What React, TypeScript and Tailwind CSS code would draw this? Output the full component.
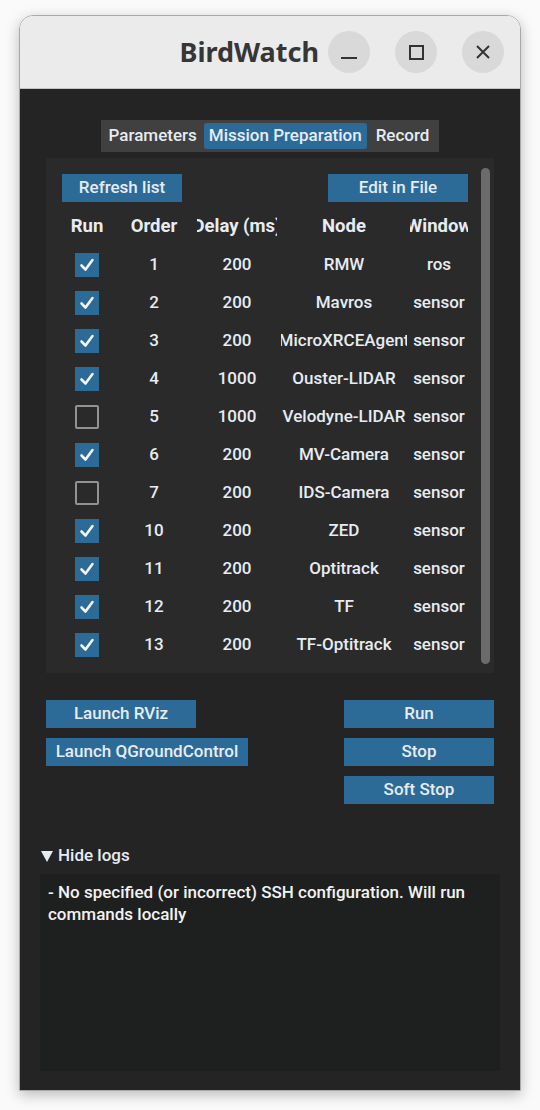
import React from "react";

type Row = { run: boolean; order: number; delay: number; node: string; window: string };

const rows: Row[] = [
  { run: true, order: 1, delay: 200, node: "RMW", window: "ros" },
  { run: true, order: 2, delay: 200, node: "Mavros", window: "sensor" },
  { run: true, order: 3, delay: 200, node: "MicroXRCEAgent", window: "sensor" },
  { run: true, order: 4, delay: 1000, node: "Ouster-LIDAR", window: "sensor" },
  { run: false, order: 5, delay: 1000, node: "Velodyne-LIDAR", window: "sensor" },
  { run: true, order: 6, delay: 200, node: "MV-Camera", window: "sensor" },
  { run: false, order: 7, delay: 200, node: "IDS-Camera", window: "sensor" },
  { run: true, order: 10, delay: 200, node: "ZED", window: "sensor" },
  { run: true, order: 11, delay: 200, node: "Optitrack", window: "sensor" },
  { run: true, order: 12, delay: 200, node: "TF", window: "sensor" },
  { run: true, order: 13, delay: 200, node: "TF-Optitrack", window: "sensor" },
];

// column widths/offsets, same for header and rows
const cols = ["w-[50px]", "w-[84px]", "w-[80px] ml-[1px]", "w-[126px] ml-[4px]", "w-[58px] ml-[3px]"];

const Cell = ({ w, children }: { w: string; children: React.ReactNode }) => (
  <div className={`${w} shrink-0 flex justify-center overflow-hidden whitespace-nowrap`}>{children}</div>
);

const Btn = ({ label, className }: { label: string; className: string }) => (
  <button className={`h-[28px] bg-[#2c6a98] text-[#e6ecf2] flex items-center justify-center whitespace-nowrap ${className}`}>
    {label}
  </button>
);

const Check = ({ on }: { on: boolean }) =>
  on ? (
    <div className="w-[24px] h-[24px] bg-[#2c6a98] flex items-center justify-center">
      <svg width="18" height="18" viewBox="0 0 18 18">
        <path d="M3.5 9.5 L7.5 13.5 L14.5 4" fill="none" stroke="#f4f4f4" strokeWidth="2.6" strokeLinecap="round" strokeLinejoin="round" />
      </svg>
    </div>
  ) : (
    <div className="w-[24px] h-[24px] border-[2px] border-[#929292] rounded-[2px] bg-[#2a2a2a]" />
  );

export default function App() {
  return (
    <div className="min-h-[1110px] bg-[#fafafa] pt-[15px] pl-[19px]" style={{ fontFamily: "Roboto, 'Noto Sans', sans-serif" }}>
      <div className="w-[502px] h-[1076px] rounded-t-[14px] border border-[#a9a9a9] overflow-hidden shadow-[0_4px_14px_rgba(0,0,0,0.25)] flex flex-col">
        {/* title bar */}
        <div className="h-[73px] bg-[#ebebeb] border-b border-[#c4c4c4] flex items-center shrink-0">
          <div className="flex-1" />
          <div
            className="text-[27px] font-bold text-[#363636] mr-[9px]"
            style={{ fontFamily: "'Noto Sans', 'Open Sans', sans-serif" }}
          >
            BirdWatch
          </div>
          <div className="flex items-center gap-[25px] pr-[16px]">
            <div className="w-[42px] h-[42px] rounded-full bg-[#d9d9d9] flex items-center justify-center">
              <div className="w-[16px] h-[2px] bg-[#333] mt-[12px]" />
            </div>
            <div className="w-[42px] h-[42px] rounded-full bg-[#d9d9d9] flex items-center justify-center">
              <div className="w-[15px] h-[15px] border-[2px] border-[#333]" />
            </div>
            <div className="w-[42px] h-[42px] rounded-full bg-[#d9d9d9] flex items-center justify-center">
              <svg width="16" height="16" viewBox="0 0 16 16">
                <path d="M2 2 L14 14 M14 2 L2 14" stroke="#333" strokeWidth="2" />
              </svg>
            </div>
          </div>
        </div>

        {/* content */}
        <div className="flex-1 bg-[#242424] text-[17px] font-medium text-[#e6ecf2] flex flex-col pt-[31px]">
          <div className="flex justify-center">
            <div className="flex items-center h-[32px] bg-[#404040] px-[1px]">
              <div className="px-[7px] h-[26px] flex items-center">Parameters</div>
              <div className="px-[5px] h-[26px] flex items-center bg-[#2c6a98] rounded-[3px]">Mission Preparation</div>
              <div className="px-[9px] h-[26px] flex items-center">Record</div>
            </div>
          </div>

          {/* panel */}
          <div className="mx-[26px] mt-[6px] h-[515px] bg-[#2a2a2a] flex">
            <div className="flex-1 pl-[16px] pt-[16px] pr-[13px]">
              <div className="flex justify-between">
                <Btn label="Refresh list" className="w-[120px]" />
                <Btn label="Edit in File" className="w-[140px]" />
              </div>
              <div className="flex h-[38px] mt-[6px] items-center text-[18.5px] font-bold">
                {["Run", "Order", "Delay (ms)", "Node", "Window"].map((h, i) => (
                  <Cell key={h} w={cols[i]}>{h}</Cell>
                ))}
              </div>
              {rows.map((r) => (
                <div key={r.order} className="flex h-[38px] items-center">
                  <Cell w={cols[0]}><Check on={r.run} /></Cell>
                  <Cell w={cols[1]}>{r.order}</Cell>
                  <Cell w={cols[2]}>{r.delay}</Cell>
                  <Cell w={cols[3]}>{r.node}</Cell>
                  <Cell w={cols[4]}>{r.window}</Cell>
                </div>
              ))}
            </div>
            <div className="w-[12px] mr-[4px] pt-[10px] pb-[9px] flex justify-center">
              <div className="w-[9px] h-full rounded-full bg-[#6b6b6b]" />
            </div>
          </div>

          {/* actions */}
          <div className="mx-[26px] mt-[27px] flex justify-between">
            <div className="flex flex-col gap-[10px] items-start">
              <Btn label="Launch RViz" className="w-[150px]" />
              <Btn label="Launch QGroundControl" className="w-[202px]" />
            </div>
            <div className="flex flex-col gap-[10px]">
              <Btn label="Run" className="w-[150px]" />
              <Btn label="Stop" className="w-[150px]" />
              <Btn label="Soft Stop" className="w-[150px]" />
            </div>
          </div>

          {/* logs */}
          <div className="mx-[20px] mt-[41px] flex items-center h-[22px]">
            <svg width="12" height="13" viewBox="0 0 12 13" className="mr-[5px] ml-[1px]">
              <path d="M0 1 L12 1 L6 12 Z" fill="#e6ecf2" />
            </svg>
            <span>Hide logs</span>
          </div>
          <div className="mx-[20px] mt-[7px] h-[197px] bg-[#1e1f1f] px-[8px] pt-[7px] text-[#f2f2f2] leading-[22px]">
            - No specified (or incorrect) SSH configuration. Will run commands locally
          </div>
        </div>
      </div>
    </div>
  );
}
